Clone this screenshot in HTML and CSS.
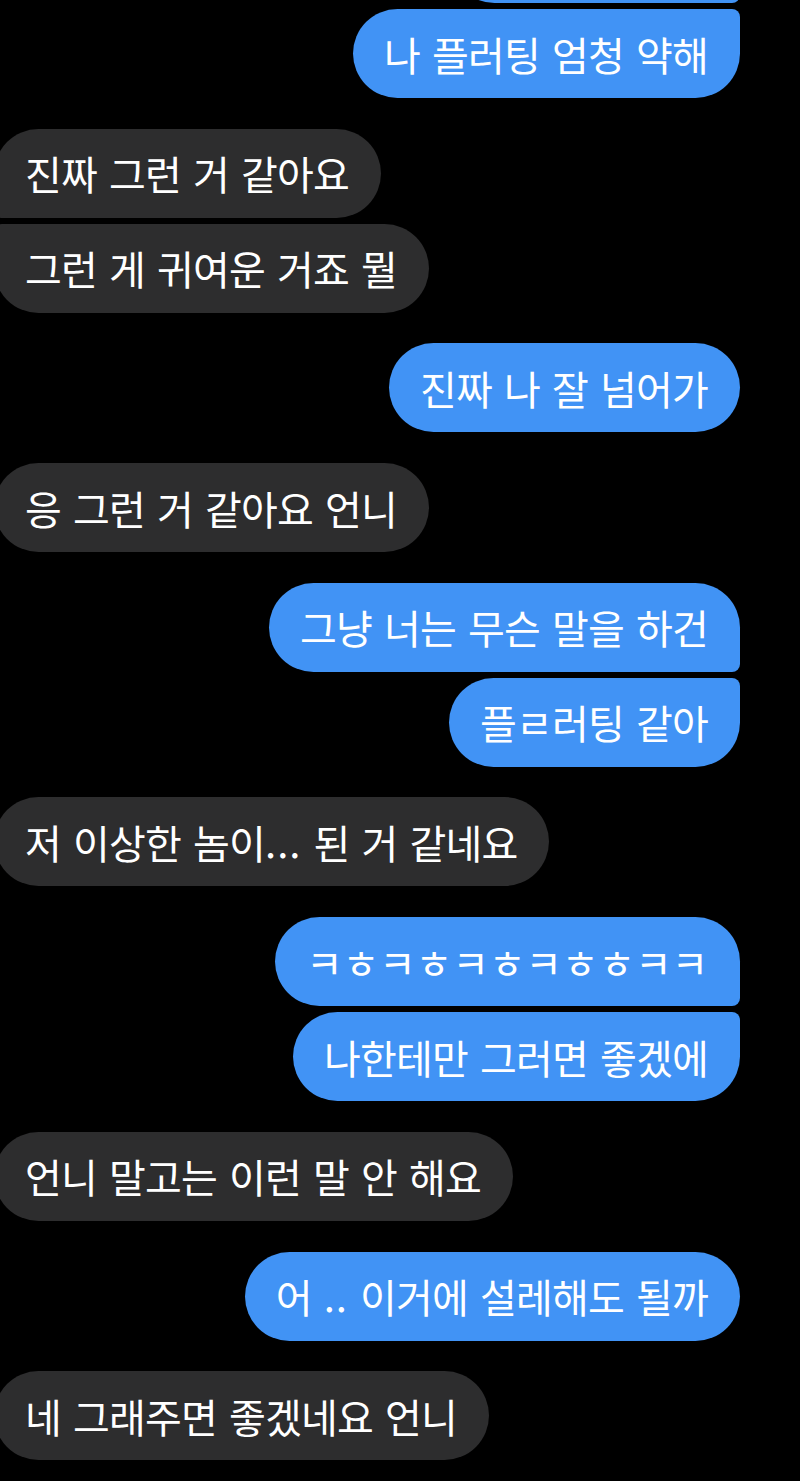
FILE: index.html
```html
<!DOCTYPE html>
<html lang="ko">
<head>
<meta charset="utf-8">
<title>메시지</title>
<link rel="stylesheet" href="styles.css">
</head>
<body>
<main class="thread">
  <section class="group out">
    <div class="bubble bubble--partial" aria-hidden="true"></div>
    <div class="bubble"><span class="text">나 플러팅 엄청 약해</span></div>
  </section>
  <section class="group in">
    <div class="bubble"><span class="text">진짜 그런 거 같아요</span></div>
    <div class="bubble"><span class="text">그런 게 귀여운 거죠 뭘</span></div>
  </section>
  <section class="group out">
    <div class="bubble"><span class="text">진짜 나 잘 넘어가</span></div>
  </section>
  <section class="group in">
    <div class="bubble"><span class="text">응 그런 거 같아요 언니</span></div>
  </section>
  <section class="group out">
    <div class="bubble"><span class="text">그냥 너는 무슨 말을 하건</span></div>
    <div class="bubble"><span class="text">플ㄹ러팅 같아</span></div>
  </section>
  <section class="group in">
    <div class="bubble"><span class="text">저 이상한 놈이<span class="dots">...</span> 된 거 같네요</span></div>
  </section>
  <section class="group out">
    <div class="bubble"><span class="text text--jamo">ㅋㅎㅋㅎㅋㅎㅋㅎㅎㅋㅋ</span></div>
    <div class="bubble"><span class="text">나한테만 그러면 좋겠에</span></div>
  </section>
  <section class="group in">
    <div class="bubble"><span class="text">언니 말고는 이런 말 안 해요</span></div>
  </section>
  <section class="group out">
    <div class="bubble"><span class="text">어 <span class="dots">..</span> 이거에 설레해도 될까</span></div>
  </section>
  <section class="group in">
    <div class="bubble"><span class="text">네 그래주면 좋겠네요 언니</span></div>
  </section>
</main>
</body>
</html>
```
FILE: styles.css
```css
html, body {
  margin: 0;
  padding: 0;
  background: #000;
}

body {
  width: 800px;
  height: 1481px;
  overflow: hidden;
  font-family: "Noto Sans CJK KR", "Noto Sans", sans-serif;
}

.thread {
  display: flex;
  flex-direction: column;
  gap: 30.7px;
  margin-top: -86px;
  padding-right: 60px;
}

.group {
  display: flex;
  flex-direction: column;
  gap: 6px;
}

.group.out {
  align-items: flex-end;
}

.group.in {
  align-items: flex-start;
}

.bubble {
  box-sizing: border-box;
  height: 89px;
  display: flex;
  align-items: center;
  padding: 0 32px 0 31px;
  border-radius: 44.5px;
  color: #fff;
  font-size: 40px;
  line-height: 1;
  white-space: nowrap;
}

.text {
  display: block;
  letter-spacing: -0.8px;
  word-spacing: 1.6px;
}

.text--jamo {
  letter-spacing: -0.25px;
}

.out .bubble {
  background: #4193f5;
}

.in .bubble {
  background: #2d2d2e;
  margin-left: -6px;
}

.out .bubble:not(:last-child) {
  border-bottom-right-radius: 8px;
}

.out .bubble:not(:first-child) {
  border-top-right-radius: 8px;
}

.in .bubble:not(:last-child) {
  border-bottom-left-radius: 8px;
}

.in .bubble:not(:first-child) {
  border-top-left-radius: 8px;
}

.bubble--partial {
  width: 290px;
}

.dots {
  letter-spacing: 1px;
}
```
